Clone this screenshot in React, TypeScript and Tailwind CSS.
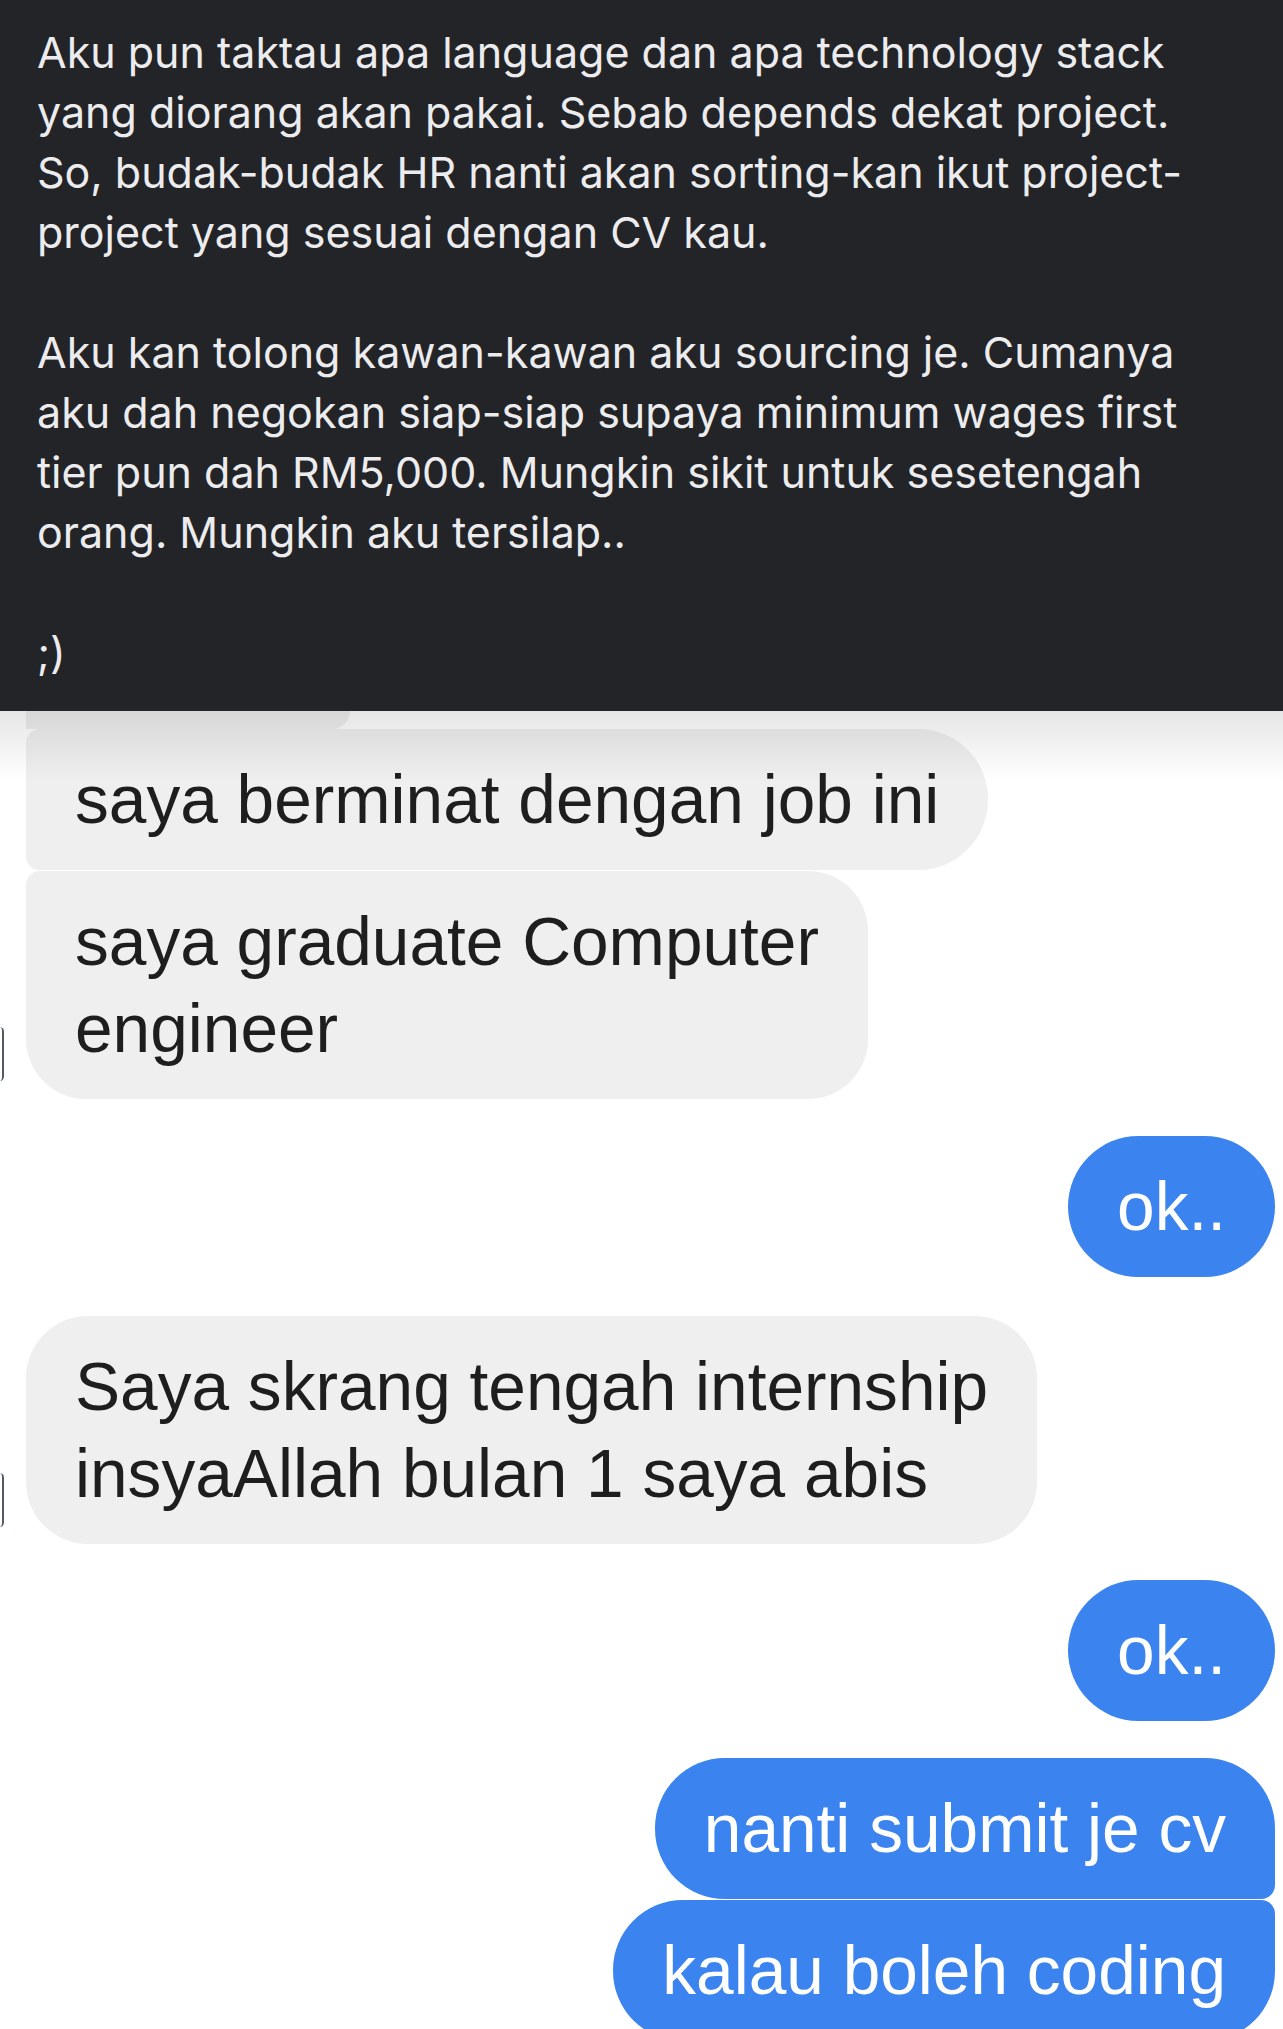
const POST = [
  [
    "Aku pun taktau apa language dan apa technology stack",
    "yang diorang akan pakai. Sebab depends dekat project.",
    "So, budak-budak HR nanti akan sorting-kan ikut project-",
    "project yang sesuai dengan CV kau.",
  ],
  [
    "Aku kan tolong kawan-kawan aku sourcing je. Cumanya",
    "aku dah negokan siap-siap supaya minimum wages first",
    "tier pun dah RM5,000. Mungkin sikit untuk sesetengah",
    "orang. Mungkin aku tersilap..",
  ],
  [";)"],
];

function Them({ lines, corners }: { lines: string[]; corners: string }) {
  return (
    <div className={`w-fit bg-[#efefef] px-[49px] py-[27px] text-[67.6px] leading-[87px] text-[#1e1e1f] ${corners}`}>
      {lines.map((l, i) => (
        <div key={i} className="whitespace-nowrap">{l}</div>
      ))}
    </div>
  );
}

function Me({ text, corners }: { text: string; corners: string }) {
  return (
    <div className={`w-fit bg-[#3b83ef] px-[49px] py-[27px] text-[67.6px] leading-[87px] text-white whitespace-nowrap ${corners}`}>
      {text}
    </div>
  );
}

export default function App() {
  return (
    <div className="w-[1283px] h-[2029px] overflow-hidden bg-white">
      {/* post text, dark mode */}
      <div className="h-[711px] bg-[#232427] pl-[37px] pt-[22px] font-['Inter',sans-serif] text-[43px] leading-[60px] text-[#ececee] flex flex-col gap-[60px]">
        {POST.map((p, i) => (
          <div key={i}>
            {p.map((l, j) => (
              <div key={j} className="whitespace-nowrap">{l}</div>
            ))}
          </div>
        ))}
      </div>

      {/* chat screenshot */}
      <div className="relative font-['Liberation_Sans',Arial,sans-serif]">
        <div className="absolute inset-x-0 top-0 h-[70px] bg-gradient-to-b from-black/10 to-transparent pointer-events-none z-10" />
        <div className="absolute left-[-5px] top-[316px] w-[9px] h-[54px] rounded-full border-r-[2px] border-[#27303c]/80" />
        <div className="absolute left-[-5px] top-[762px] w-[9px] h-[54px] rounded-full border-r-[2px] border-[#27303c]/80" />

        <div className="flex flex-col">
          <div className="ml-[26px] w-[324px] h-[18px] bg-[#efefef] rounded-br-[18px]" />
          <div className="ml-[26px] flex flex-col gap-[1px]">
            <Them lines={["saya berminat dengan job ini"]} corners="rounded-l-[14px] rounded-r-[70px]" />
            <Them lines={["saya graduate Computer", "engineer"]} corners="rounded-tl-[14px] rounded-tr-[60px] rounded-b-[60px]" />
          </div>

          <div className="mt-[37px] mr-[8px] self-end">
            <Me text="ok.." corners="rounded-full" />
          </div>

          <div className="mt-[39px] ml-[26px]">
            <Them lines={["Saya skrang tengah internship", "insyaAllah bulan 1 saya abis"]} corners="rounded-[62px]" />
          </div>

          <div className="mt-[36px] mr-[8px] self-end">
            <Me text="ok.." corners="rounded-full" />
          </div>

          <div className="mt-[37px] mr-[8px] self-end flex flex-col items-end gap-[1px]">
            <Me text="nanti submit je cv" corners="rounded-l-[70px] rounded-tr-[70px] rounded-br-[14px]" />
            <Me text="kalau boleh coding" corners="rounded-l-[70px] rounded-tr-[14px] rounded-br-[70px]" />
          </div>
        </div>
      </div>
    </div>
  );
}
